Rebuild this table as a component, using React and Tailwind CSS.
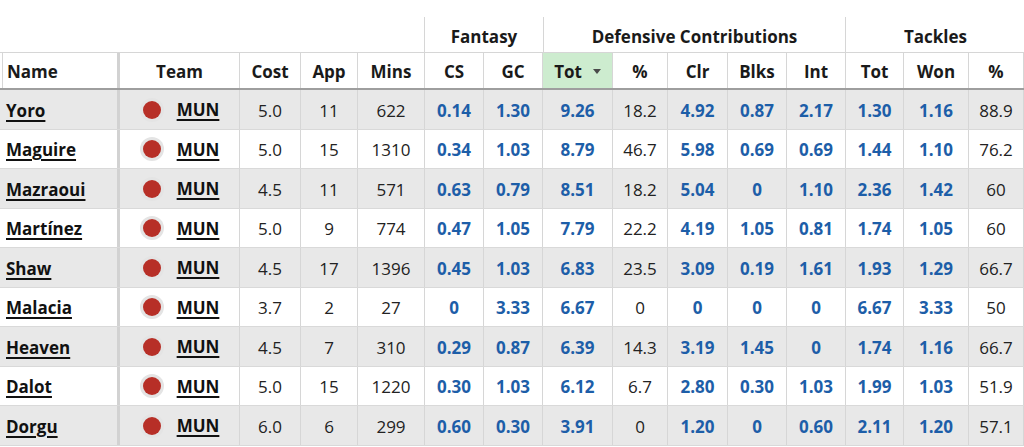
import React from "react";

const cols = [
  { key: "name", label: "Name", w: "w-[118px]" },
  { key: "team", label: "Team", w: "w-[120px]" },
  { key: "cost", label: "Cost", w: "w-[61px]" },
  { key: "app", label: "App", w: "w-[57px]" },
  { key: "mins", label: "Mins", w: "w-[67px]" },
  { key: "cs", label: "CS", w: "w-[59px]" },
  { key: "gc", label: "GC", w: "w-[59px]" },
  { key: "tot", label: "Tot", w: "w-[70px]" },
  { key: "pct", label: "%", w: "w-[55px]" },
  { key: "clr", label: "Clr", w: "w-[60px]" },
  { key: "blks", label: "Blks", w: "w-[59px]" },
  { key: "int", label: "Int", w: "w-[59px]" },
  { key: "ttot", label: "Tot", w: "w-[58px]" },
  { key: "won", label: "Won", w: "w-[65px]" },
  { key: "tpct", label: "%", w: "w-[55px]" },
];

const rows = [
  ["Yoro", "5.0", "11", "622", "0.14", "1.30", "9.26", "18.2", "4.92", "0.87", "2.17", "1.30", "1.16", "88.9"],
  ["Maguire", "5.0", "15", "1310", "0.34", "1.03", "8.79", "46.7", "5.98", "0.69", "0.69", "1.44", "1.10", "76.2"],
  ["Mazraoui", "4.5", "11", "571", "0.63", "0.79", "8.51", "18.2", "5.04", "0", "1.10", "2.36", "1.42", "60"],
  ["Martínez", "5.0", "9", "774", "0.47", "1.05", "7.79", "22.2", "4.19", "1.05", "0.81", "1.74", "1.05", "60"],
  ["Shaw", "4.5", "17", "1396", "0.45", "1.03", "6.83", "23.5", "3.09", "0.19", "1.61", "1.93", "1.29", "66.7"],
  ["Malacia", "3.7", "2", "27", "0", "3.33", "6.67", "0", "0", "0", "0", "6.67", "3.33", "50"],
  ["Heaven", "4.5", "7", "310", "0.29", "0.87", "6.39", "14.3", "3.19", "1.45", "0", "1.74", "1.16", "66.7"],
  ["Dalot", "5.0", "15", "1220", "0.30", "1.03", "6.12", "6.7", "2.80", "0.30", "1.03", "1.99", "1.03", "51.9"],
  ["Dorgu", "6.0", "6", "299", "0.60", "0.30", "3.91", "0", "1.20", "0", "0.60", "2.11", "1.20", "57.1"],
];

const blueIdx = new Set([3, 4, 5, 7, 8, 9, 10, 11]);

function TeamBadge() {
  return (
    <div className="flex items-center justify-center gap-[13px]">
      <span className="w-[24px] h-[24px] rounded-full bg-[#e4e4e4] flex items-center justify-center">
        <span className="w-[18px] h-[18px] rounded-full bg-[#b72f27]" />
      </span>
      <span className="font-bold underline underline-offset-[3px] decoration-[1.5px] text-[#111]">MUN</span>
    </div>
  );
}

export default function App() {
  return (
    <div
      className="w-[1024px] h-[447px] overflow-hidden bg-white pt-[17px] text-[17px] leading-none text-[#1a1a1a]"
      style={{ fontFamily: '"Open Sans", "Noto Sans", Arial, sans-serif' }}
    >
      <div className="w-[1040px]">
        {/* group header row */}
        <div className="flex h-[35px] font-bold">
          <div className="w-[424px]" />
          <div className="w-[119px] border-l border-[#d6d6d6] flex items-center justify-center pt-[4px]">Fantasy</div>
          <div className="w-[302px] border-l border-[#d6d6d6] flex items-center justify-center pt-[4px]">Defensive Contributions</div>
          <div className="w-[180px] border-l border-[#d6d6d6] flex items-center justify-center pt-[4px]">Tackles</div>
        </div>
        {/* header row */}
        <div className="flex h-[38px] border-t border-[#d6d6d6] border-b-2 border-b-[#9e9e9e] font-bold">
          {cols.map((c, i) => {
            if (i === 0)
              return (
                <div key={c.key} className={`${c.w} ml-[2px] border-l border-[#d6d6d6] border-r-[3px] border-r-[#d2d2d2] flex items-center pl-[4px] pt-[2px] shrink-0`}>
                  {c.label}
                </div>
              );
            if (c.key === "tot")
              return (
                <div key={c.key} className={`${c.w} border-r border-[#d6d6d6] bg-[#cdeccf] flex items-center justify-center gap-[11px] pt-[2px] shrink-0`}>
                  <span>{c.label}</span>
                  <span className="w-0 h-0 border-l-[4.5px] border-r-[4.5px] border-t-[5px] border-l-transparent border-r-transparent border-t-[#4a4a4a]" />
                </div>
              );
            return (
              <div key={c.key} className={`${c.w} border-r border-[#d6d6d6] flex items-center justify-center pt-[2px] shrink-0`}>
                {c.label}
              </div>
            );
          })}
        </div>
        {/* data rows */}
        {rows.map((r, ri) => (
          <div
            key={r[0]}
            className={`flex h-[39.5px] border-b border-[#d9d9d9] ${ri % 2 === 0 ? "bg-[#e8e8e8]" : "bg-white"}`}
          >
            <div className="w-[120px] border-r-[3px] border-r-[#d2d2d2] flex items-center pl-[6px] pt-[2px] shrink-0">
              <span className="font-bold underline underline-offset-[3px] decoration-[1.5px] text-[#111]">{r[0]}</span>
            </div>
            <div className="w-[120px] border-r border-[#d6d6d6] flex items-center justify-center pt-[1px] shrink-0">
              <TeamBadge />
            </div>
            {r.slice(1).map((v, vi) => {
              const c = cols[vi + 2];
              const blue = blueIdx.has(vi);
              return (
                <div
                  key={vi}
                  className={`${c.w} border-r border-[#d6d6d6] flex items-center justify-center pt-[2px] shrink-0 ${blue ? "font-bold text-[#1d5ea8]" : "text-[#222]"}`}
                >
                  {v}
                </div>
              );
            })}
          </div>
        ))}
      </div>
    </div>
  );
}
